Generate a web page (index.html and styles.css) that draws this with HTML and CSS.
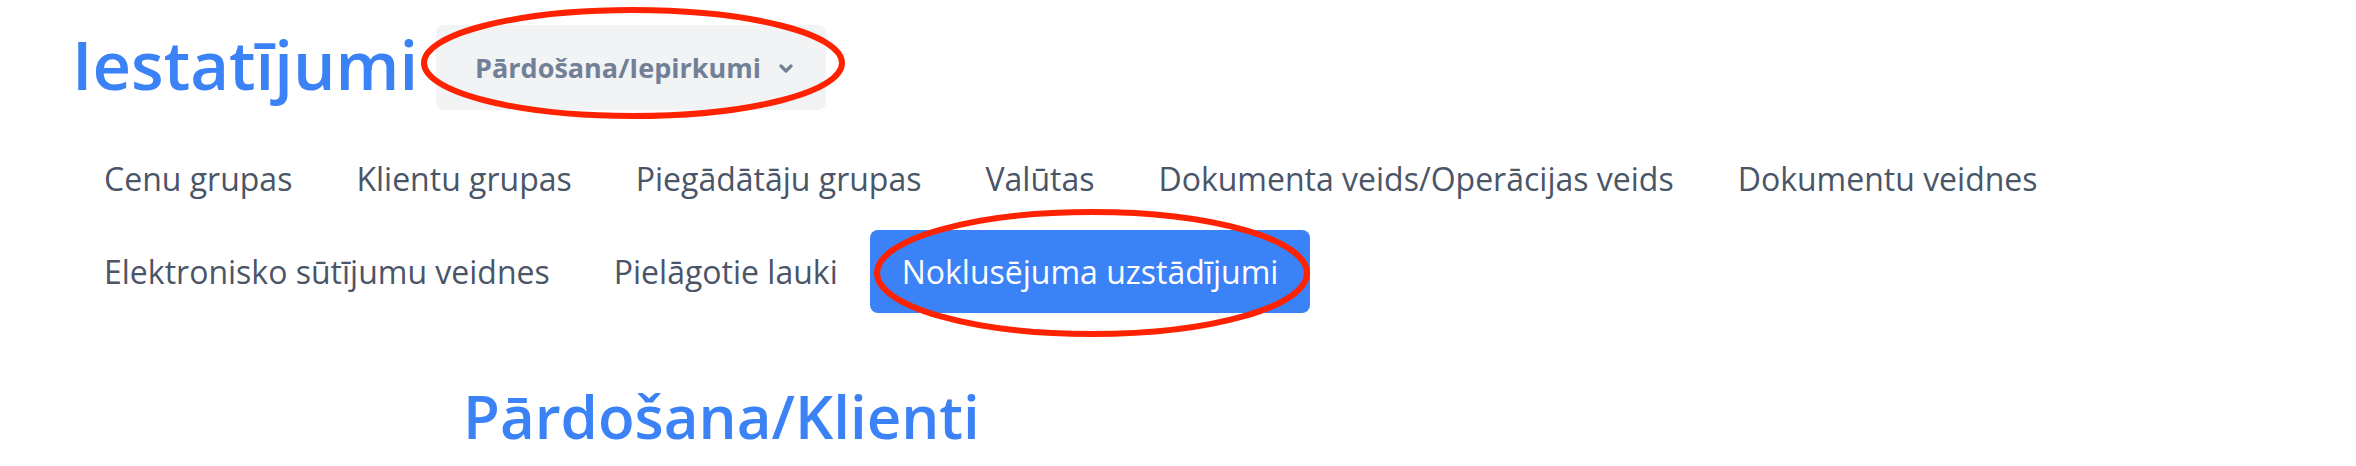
FILE: index.html
```html
<!DOCTYPE html>
<html lang="lv">
<head>
<meta charset="utf-8">
<title>Iestatījumi</title>
<link rel="stylesheet" href="styles.css">
</head>
<body>
<div class="page">
  <header class="header">
    <h1 class="title">Iestatījumi</h1>
    <button class="dropdown" type="button">
      <span class="dropdown-label">Pārdošana/Iepirkumi</span>
      <svg class="chevron" width="14" height="9" viewBox="0 0 14 9" aria-hidden="true">
        <path d="M2 2 L7 7 L12 2" fill="none" stroke="#718096" stroke-width="3.2" stroke-linecap="round" stroke-linejoin="round"/>
      </svg>
    </button>
  </header>
  <nav class="tabs">
    <a class="tab">Cenu grupas</a>
    <a class="tab">Klientu grupas</a>
    <a class="tab">Piegādātāju grupas</a>
    <a class="tab">Valūtas</a>
    <a class="tab">Dokumenta veids/Operācijas veids</a>
    <a class="tab">Dokumentu veidnes</a>
    <a class="tab">Elektronisko sūtījumu veidnes</a>
    <a class="tab">Pielāgotie lauki</a>
    <a class="tab tab-active">Noklusējuma uzstādījumi</a>
  </nav>
  <h2 class="section-title">Pārdošana/Klienti</h2>
</div>
<svg class="annotations" width="2356" height="466" viewBox="0 0 2356 466" aria-hidden="true">
  <ellipse cx="633" cy="63" rx="209" ry="53" fill="none" stroke="#ff2200" stroke-width="6"/>
  <ellipse cx="1092" cy="273" rx="215" ry="61" fill="none" stroke="#ff2200" stroke-width="6"/>
</svg>
</body>
</html>
```

FILE: styles.css
```css
html, body {
  margin: 0;
  padding: 0;
  background: #ffffff;
}

body {
  font-family: "Open Sans", "Noto Sans", sans-serif;
  width: 2356px;
  height: 466px;
  overflow: hidden;
  position: relative;
}

.page {
  padding: 19px 0 0 72px;
}

.header {
  display: flex;
  align-items: flex-end;
  gap: 18px;
}

.title {
  margin: 0;
  font-size: 67px;
  font-weight: 600;
  line-height: 91px;
  color: #3b82f6;
}

.dropdown {
  display: flex;
  align-items: center;
  height: 85px;
  width: 390px;
  box-sizing: border-box;
  padding: 0 0 0 39px;
  border: none;
  border-radius: 8px;
  background: #f2f3f5;
  font-family: inherit;
  cursor: pointer;
}

.dropdown-label {
  font-size: 27px;
  font-weight: 700;
  color: #718096;
  line-height: 40px;
}

.chevron {
  margin-left: 18px;
  margin-top: 2px;
}

.tabs {
  display: flex;
  flex-wrap: wrap;
  row-gap: 10px;
  margin-top: 27px;
}

.tab {
  display: block;
  height: 83px;
  line-height: 83px;
  padding: 0 32px;
  font-size: 32px;
  color: #4a5568;
  border-radius: 8px;
  white-space: nowrap;
}

.tab-active {
  background: #3b82f6;
  color: #ffffff;
}

.section-title {
  margin: 62px 0 0 391px;
  font-size: 60px;
  font-weight: 600;
  line-height: 82px;
  color: #3b82f6;
}

.annotations {
  position: absolute;
  top: 0;
  left: 0;
  pointer-events: none;
}
```
